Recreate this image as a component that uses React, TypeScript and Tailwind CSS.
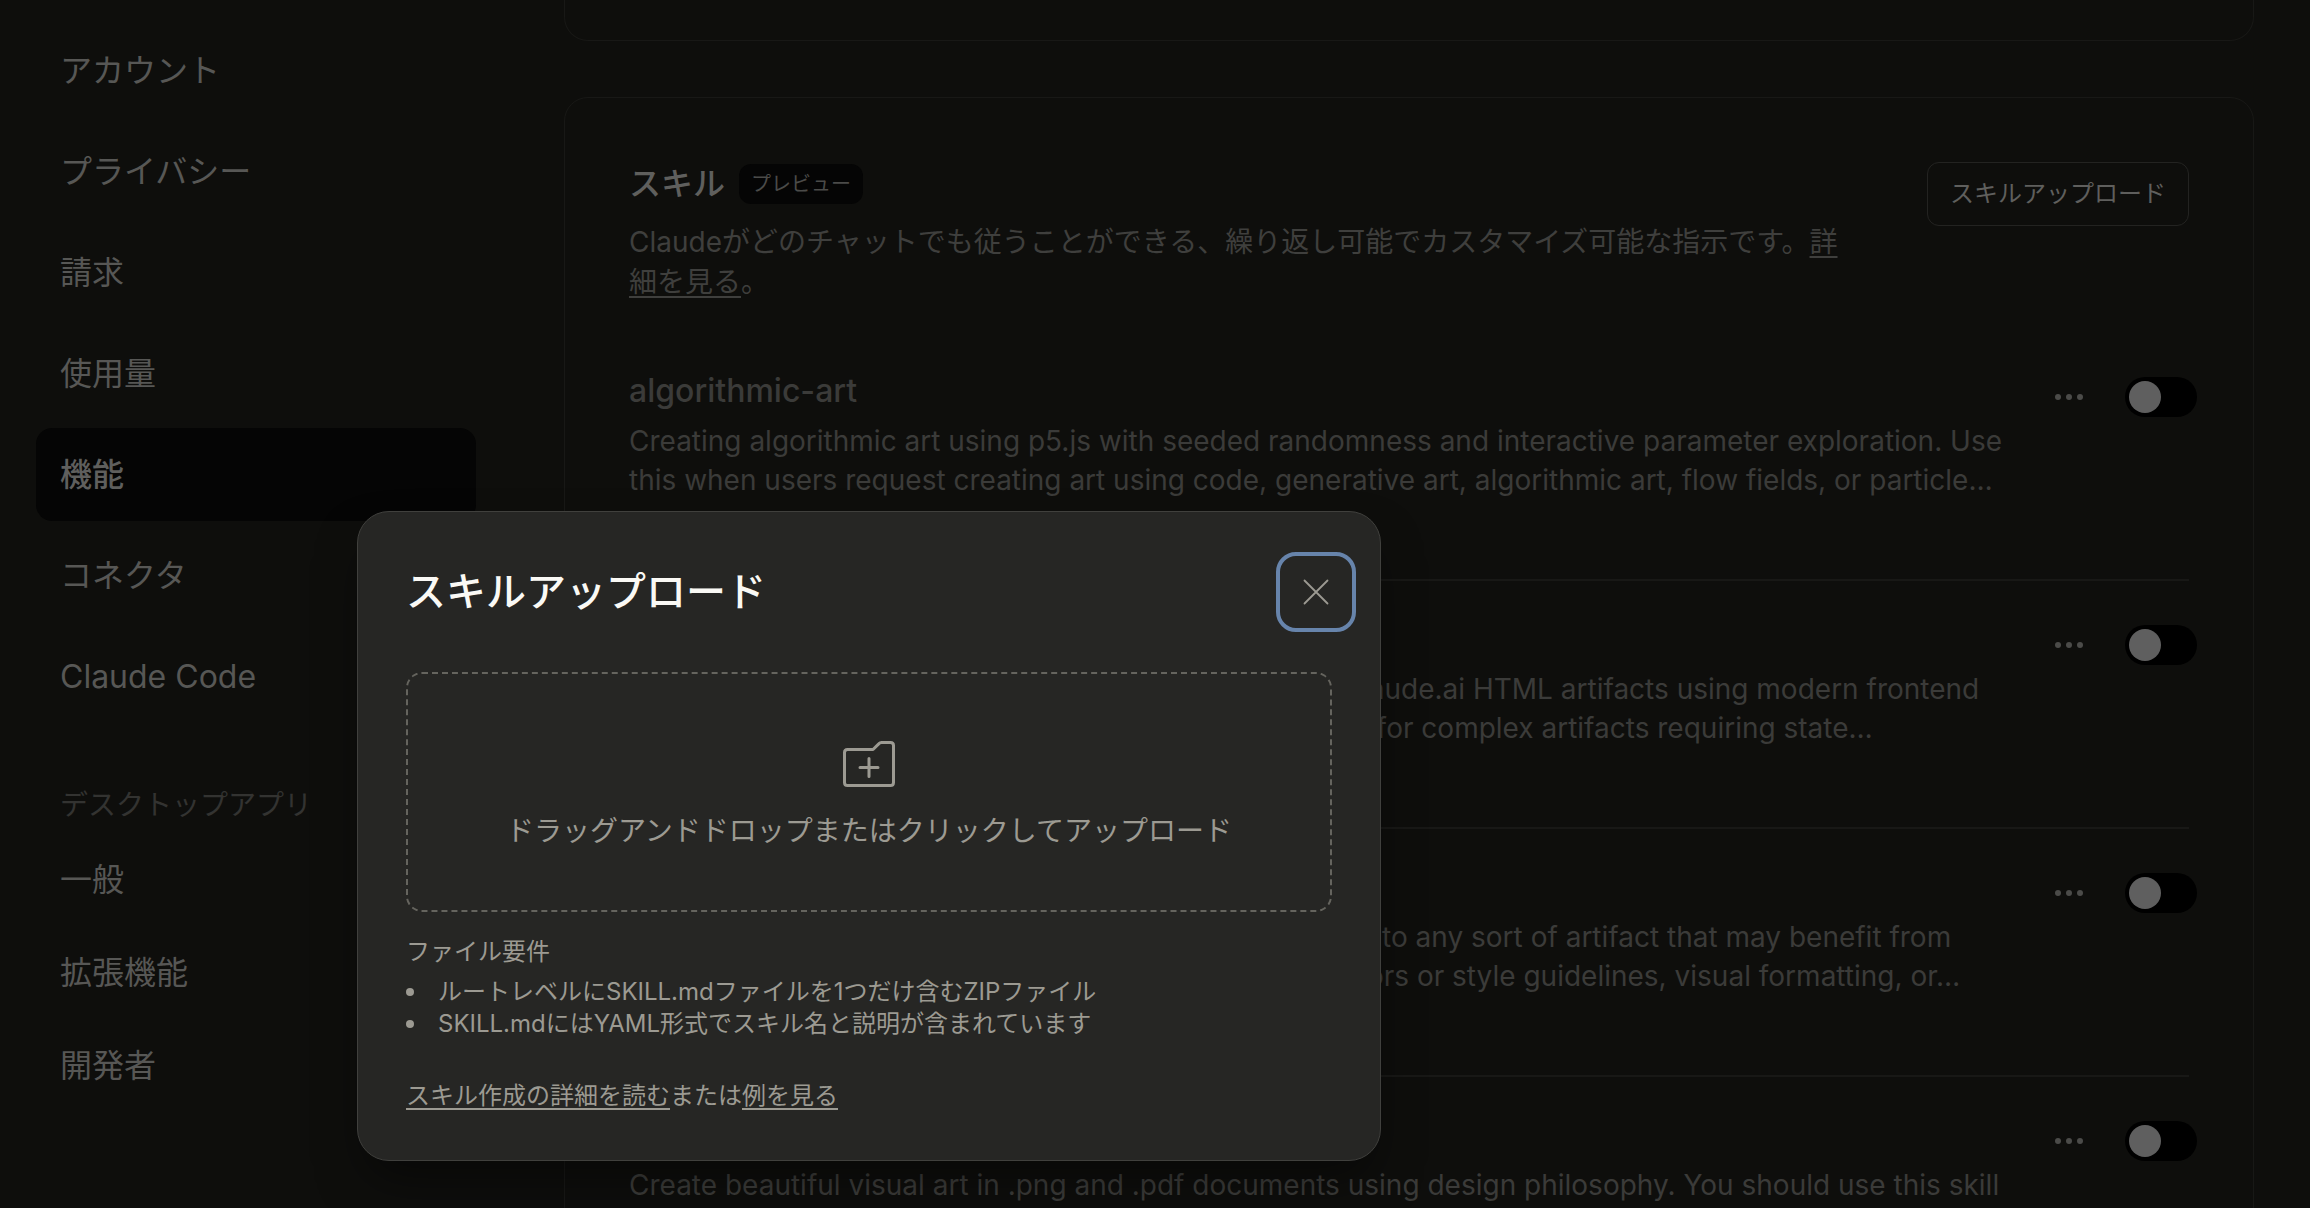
import { useState } from 'react';
import { clsx } from 'clsx';

interface Skill {
  name: string;
  lines: string[];
}

const NAV_ITEMS = ['アカウント', 'プライバシー', '請求', '使用量', '機能', 'コネクタ', 'Claude Code'];
const DESKTOP_ITEMS = ['一般', '拡張機能', '開発者'];

const SKILLS: Skill[] = [
  {
    name: 'algorithmic-art',
    lines: [
      'Creating algorithmic art using p5.js with seeded randomness and interactive parameter exploration. Use',
      'this when users request creating art using code, generative art, algorithmic art, flow fields, or particle…',
    ],
  },
  {
    name: 'artifacts-builder',
    lines: [
      'Suite of tools for creating elaborate, multi-component claude.ai HTML artifacts using modern frontend',
      'web technologies (React, Tailwind CSS, shadcn/ui). Use for complex artifacts requiring state…',
    ],
  },
  {
    name: 'brand-guidelines',
    lines: [
      "Applies Anthropic's official brand colors and typography to any sort of artifact that may benefit from",
      "having Anthropic's look-and-feel. Use it when brand colors or style guidelines, visual formatting, or…",
    ],
  },
  {
    name: 'canvas-design',
    lines: [
      'Create beautiful visual art in .png and .pdf documents using design philosophy. You should use this skill',
    ],
  },
];

function NavLink({ label, active }: { label: string; active?: boolean }) {
  return (
    <a
      href="#"
      aria-current={active ? 'page' : undefined}
      className={clsx(
        'flex h-[93px] items-center rounded-2xl px-6 text-[32px] leading-[44px]',
        active ? 'bg-[#050505] font-medium text-[#5f5f5d]' : 'text-[#575755]'
      )}
    >
      {label}
    </a>
  );
}

function Sidebar() {
  return (
    <nav className="w-[440px] shrink-0 pt-6">
      <div className="flex flex-col gap-2">
        {NAV_ITEMS.map((label) => (
          <NavLink key={label} label={label} active={label === '機能'} />
        ))}
      </div>
      <h3 className="mt-16 mb-2.5 px-6 text-[28px] leading-9 text-[#333331]">デスクトップアプリ</h3>
      {DESKTOP_ITEMS.map((label) => (
        <NavLink key={label} label={label} />
      ))}
    </nav>
  );
}

function SkillRow({ skill }: { skill: Skill }) {
  const [enabled, setEnabled] = useState(false);

  return (
    <li className="flex items-start justify-between border-b-2 border-[#181816] pt-9 pb-[79px]">
      <div>
        <h3 className="mb-[9px] text-[32px] leading-[44px] font-medium text-[#3b3b39]">{skill.name}</h3>
        <p className="text-[28px] leading-[39px] whitespace-nowrap text-[#3b3b39]">
          {skill.lines.map((line) => (
            <span key={line} className="block">
              {line}
            </span>
          ))}
        </p>
      </div>
      <div className="-mr-2 flex h-14 items-center gap-7">
        <button type="button" aria-label={`${skill.name} のメニュー`} className="p-3.5">
          <svg width="28" height="8" viewBox="0 0 28 8" fill="#4b4b49">
            <circle cx="3" cy="4" r="3" />
            <circle cx="14" cy="4" r="3" />
            <circle cx="25" cy="4" r="3" />
          </svg>
        </button>
        <input
          type="checkbox"
          role="switch"
          aria-label={skill.name}
          checked={enabled}
          onChange={(e) => setEnabled(e.target.checked)}
          className="h-10 w-[72px] appearance-none rounded-full bg-black p-1 before:block before:size-8 before:rounded-full before:bg-[#5f5f5f] checked:before:ml-8"
        />
      </div>
    </li>
  );
}

function UploadDialog() {
  return (
    <div
      role="dialog"
      aria-labelledby="upload-title"
      className="absolute top-[511px] left-[357px] w-[1024px] rounded-[32px] border border-[#40403d] bg-[#262624] px-12 pt-10 pb-12 shadow-2xl shadow-black/50"
    >
      <div className="-mr-6 flex items-center justify-between">
        <h2 id="upload-title" className="text-[40px] leading-[52px] font-medium text-[#faf9f5]">
          スキルアップロード
        </h2>
        <button
          type="button"
          aria-label="閉じる"
          className="flex size-20 items-center justify-center rounded-[20px] border-4 border-[#6784ab]"
        >
          <svg width="26" height="26" viewBox="0 0 26 26" fill="none" stroke="#9c9a92" strokeWidth="1.8" strokeLinecap="round">
            <path d="M1.5 1.5l23 23M24.5 1.5l-23 23" />
          </svg>
        </button>
      </div>

      <button
        type="button"
        className="mt-10 flex h-60 w-full flex-col items-center justify-center gap-6 rounded-2xl border-2 border-dashed border-[#65645e] pt-2 text-[28px] leading-10 text-[#9c9a92]"
      >
        <svg width="52" height="46" viewBox="0 0 52 46" fill="none" stroke="currentColor" strokeWidth="3" strokeLinejoin="round" strokeLinecap="round">
          <path d="M4.5 8.5H30L36 2.6Q37 1.5 38.5 1.5H47.5Q50.5 1.5 50.5 4.5V41.5Q50.5 44.5 47.5 44.5H4.5Q1.5 44.5 1.5 41.5V11.5Q1.5 8.5 4.5 8.5Z" />
          <path d="M26 17.5V35.5M17 26.5H35" />
        </svg>
        ドラッグアンドドロップまたはクリックしてアップロード
      </button>

      <div className="mt-6 text-[24px] leading-8 text-[#9c9a92]">
        <h3>ファイル要件</h3>
        <ul className="mt-2">
          {[
            'ルートレベルにSKILL.mdファイルを1つだけ含むZIPファイル',
            'SKILL.mdにはYAML形式でスキル名と説明が含まれています',
          ].map((item) => (
            <li key={item} className="flex items-center gap-6">
              <span className="size-2 rounded-full bg-[#9c9a92]" />
              {item}
            </li>
          ))}
        </ul>
        <p className="mt-10">
          <a href="#" className="underline decoration-2 underline-offset-4">
            スキル作成の詳細を読む
          </a>
          または
          <a href="#" className="underline decoration-2 underline-offset-4">
            例を見る
          </a>
        </p>
      </div>
    </div>
  );
}

export default function App() {
  return (
    <div
      lang="ja"
      className="relative flex h-screen gap-[88px] overflow-hidden bg-[#0e0e0c] pr-14 pl-9 font-['Inter','Noto_Sans_CJK_JP',sans-serif]"
    >
      <Sidebar />

      <main className="min-w-0 flex-1">
        <div className="h-[41px] rounded-b-3xl border-x border-b border-[#181816]" />

        <section className="mt-14 rounded-3xl border border-[#181816] p-16">
          <div className="flex items-start justify-between gap-[72px]">
            <div>
              <div className="flex h-11 items-center gap-3.5">
                <h2 className="text-[32px] font-medium text-[#5f5f5d]">スキル</h2>
                <span className="rounded-xl bg-[#050505] px-3 text-[20px] leading-10 text-[#4b4b49]">プレビュー</span>
              </div>
              <p className="mt-4 text-[28px] leading-10 text-[#3f3f3d]">
                Claudeがどのチャットでも従うことができる、繰り返し可能でカスタマイズ可能な指示です。
                <a href="#" className="underline decoration-2 underline-offset-4">
                  詳細を見る
                </a>
                。
              </p>
            </div>
            <button
              type="button"
              className="h-16 shrink-0 rounded-xl border border-[#232321] px-[22px] text-[24px] text-[#5f5f5d]"
            >
              スキルアップロード
            </button>
          </div>

          <ul className="mt-[31px]">
            {SKILLS.map((skill) => (
              <SkillRow key={skill.name} skill={skill} />
            ))}
          </ul>
        </section>
      </main>

      <UploadDialog />
    </div>
  );
}
